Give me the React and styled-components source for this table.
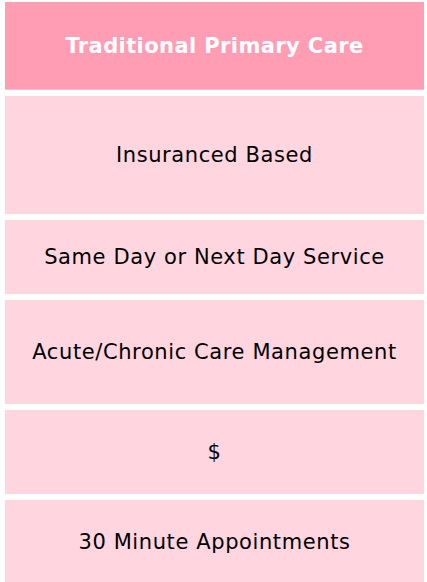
import React from 'react'
import styled, { createGlobalStyle } from 'styled-components'

const GlobalStyle = createGlobalStyle`
    body {
        margin: 0;
        background: #ffffff;
        font-family: "DejaVu Sans", "Open Sans", sans-serif;
    }
`

const rows = [
    { label: 'Insuranced Based', height: 118 },
    { label: 'Same Day or Next Day Service', height: 74 },
    { label: 'Acute/Chronic Care Management', height: 104 },
    { label: '$', height: 84 },
    { label: '30 Minute Appointments', height: 84 },
]

const App = () => (
    <>
        <GlobalStyle />
        <Column>
            <Header>Traditional Primary Care</Header>
            {rows.map(row => (
                <Cell key={row.label} $height={row.height}>{row.label}</Cell>
            ))}
        </Column>
    </>
)

const Column = styled.section`
    display: flex;
    flex-direction: column;
    gap: 6px;
    width: 419px;
    padding: 2px 0 0 5px;
`

const Header = styled.div`
    display: flex;
    align-items: center;
    justify-content: center;
    height: 87px;
    background-color: #ff9db5;
    border-bottom: 1px solid #ffb9ca;
    color: #ffffff;
    font-size: 21px;
    font-weight: 700;
    letter-spacing: 0.4px;
`

const Cell = styled.div`
    display: flex;
    align-items: center;
    justify-content: center;
    height: ${props => props.$height}px;
    background-color: #ffd6e0;
    color: #000000;
    font-size: 21px;
    letter-spacing: 0.6px;
    text-align: center;
`

export default App
